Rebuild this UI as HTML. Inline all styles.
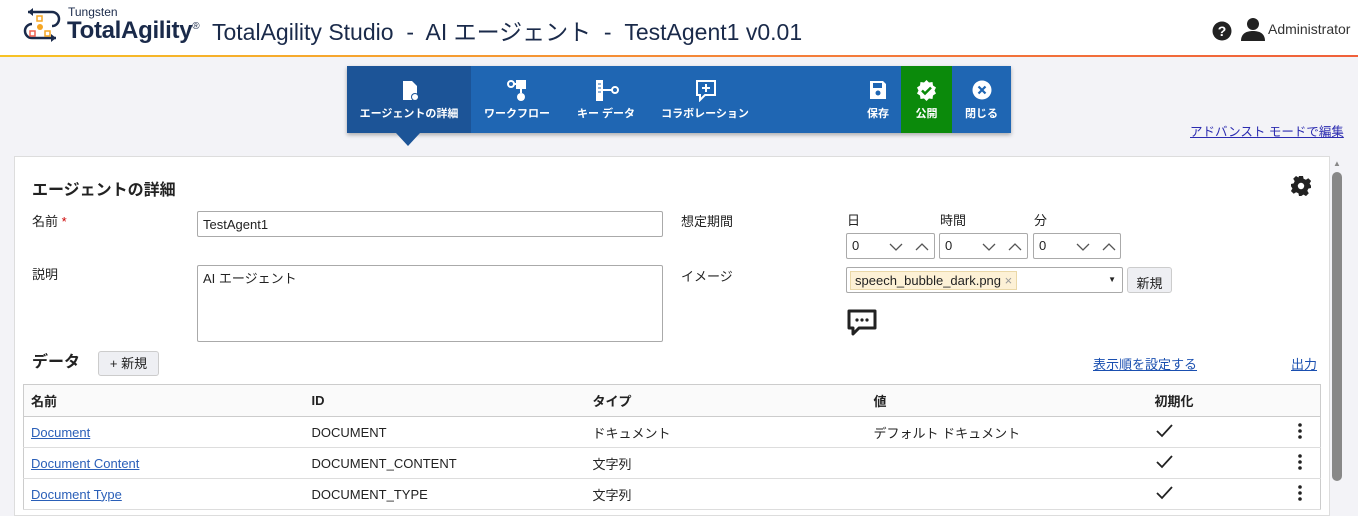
<!DOCTYPE html>
<html><head><meta charset="utf-8"><style>
*{box-sizing:border-box;margin:0;padding:0}
body{width:1358px;height:511px;overflow:hidden;background:#f3f3f7;font-family:"Liberation Sans","Noto Sans CJK JP",sans-serif;color:#222;position:relative}
.hdr{position:absolute;left:0;top:0;width:1358px;height:57px;background:#fff;border-bottom:2px solid;border-image:linear-gradient(90deg,#f7c325,#f47d3a 60%,#f0603a) 1}
.abs{position:absolute}
.nav{position:absolute;left:347px;top:66px;width:664px;height:67px;background:#1f66b3;box-shadow:0 2px 4px rgba(0,0,0,.3)}
.nav .it{position:absolute;top:0;height:67px;color:#fff;font-size:11px;font-weight:bold;text-align:center}
.nav .it span{position:absolute;left:0;right:0;top:39px}
.nav svg{position:absolute;top:14px}
.card{position:absolute;left:14px;top:156px;width:1316px;height:360px;background:#fff;border:1px solid #ddd}
.lbl{position:absolute;font-size:13px;color:#222;line-height:16px}
.inp{position:absolute;border:1px solid #aaa;background:#fff;font-size:13px;padding:6px 5px;border-radius:2px}
.btn{position:absolute;background:#eeeff3;border:1px solid #ccc;border-radius:3px;font-size:13px;text-align:center}
a{color:#1a4fb0;text-decoration:underline}
table{position:absolute;left:23px;top:384px;width:1298px;border-collapse:collapse;font-size:13px;border:1px solid #ccc}
th{text-align:left;font-weight:bold;height:32px;background:#fafafa;border-bottom:1px solid #ccc;padding-left:7px}
td{height:31px;border-bottom:1px solid #ddd;padding-left:7px}
td a{color:#2a5fb8}
.sp{position:absolute;top:9px}
</style></head><body>
<div class="hdr">
<svg class="abs" style="left:22px;top:7px" width="40" height="38" viewBox="0 0 40 38"><path d="M6 5H30a7 7 0 0 1 0 14" fill="none" stroke="#1a2a4a" stroke-width="2.5"/><path d="M6 5l5-4v8z" fill="#1a2a4a"/><path d="M10 17a7 7 0 0 0 0 14H34" fill="none" stroke="#1a2a4a" stroke-width="2.5"/><path d="M34 31l-5-4v8z" fill="#1a2a4a"/><rect x="15" y="9" width="5" height="5" fill="none" stroke="#f5a623" stroke-width="1.5"/><circle cx="18" cy="20" r="3" fill="#f5a623"/><rect x="8" y="24" width="5" height="5" fill="none" stroke="#f06050" stroke-width="1.5"/><rect x="23" y="24" width="5" height="5" fill="none" stroke="#f5a623" stroke-width="1.5"/></svg>
<div class="abs" style="left:68px;top:5px;font-size:12px;color:#1a2a4a">Tungsten</div>
<div class="abs" style="left:67px;top:17px;font-size:24px;font-weight:bold;color:#1a2a4a;letter-spacing:-0.3px">TotalAgility<sup style="font-size:10px;font-weight:normal">®</sup></div>
<div class="abs" style="left:212px;top:18px;font-size:23px;line-height:28px;color:#1a2a4a">TotalAgility Studio &nbsp;-&nbsp; AI エージェント &nbsp;-&nbsp; TestAgent1 v0.01</div>
<svg class="abs" style="left:1212px;top:21px" width="20" height="20"><circle cx="10" cy="10" r="9.5" fill="#222"/><text x="10" y="15" fill="#fff" font-size="14" font-weight="bold" text-anchor="middle" font-family="Liberation Sans">?</text></svg>
<svg class="abs" style="left:1240px;top:17px" width="26" height="24"><circle cx="13" cy="7" r="6" fill="#222"/><path d="M1 24c0-8 6-10 12-10s12 2 12 10z" fill="#222"/></svg>
<div class="abs" style="left:1268px;top:21px;font-size:14px;color:#333">Administrator</div>
</div>
<div class="nav">
<div class="it" style="left:0;width:124px;background:#1c5497"><svg style="left:54px" width="18" height="22"><path d="M2 1h9l5 5v14H2z" fill="#fff"/><circle cx="14" cy="17" r="4" fill="#1c5497"/><circle cx="14" cy="17" r="3" fill="#fff"/></svg><span>エージェントの詳細</span></div>
<div class="it" style="left:124px;width:92px"><svg style="left:36px" width="22" height="22"><circle cx="4" cy="4" r="3" fill="none" stroke="#fff" stroke-width="2"/><rect x="9" y="0" width="10" height="9" fill="#fff"/><path d="M7 4h3M14 9v4" stroke="#fff" stroke-width="2"/><circle cx="14" cy="17" r="4" fill="#fff"/></svg><span>ワークフロー</span></div>
<div class="it" style="left:216px;width:86px"><svg style="left:32px" width="24" height="22"><rect x="1" y="0" width="7" height="21" fill="#fff"/><path d="M3 4h3M3 8h3M3 12h3" stroke="#1f66b3"/><path d="M8 10h10" stroke="#fff" stroke-width="2"/><circle cx="20" cy="10" r="3" fill="none" stroke="#fff" stroke-width="2"/></svg><span>キー データ</span></div>
<div class="it" style="left:302px;width:112px"><svg style="left:47px" width="20" height="22"><path d="M1 1h18v14H9l-5 5v-5H1z" fill="none" stroke="#fff" stroke-width="2"/><path d="M10 4v8M6 8h8" stroke="#fff" stroke-width="2"/></svg><span>コラボレーション</span></div>
<div class="it" style="left:508px;width:46px"><svg style="left:14px" width="18" height="20"><path d="M1 1h13l3 3v15H1z" fill="#fff"/><rect x="4" y="3" width="9" height="5" fill="#1f66b3"/><circle cx="9" cy="13" r="2.5" fill="#1f66b3"/></svg><span>保存</span></div>
<div class="it" style="left:554px;width:51px;background:#0b8a0b"><svg style="left:15px" width="21" height="21"><path d="M10.5 0l2.5 2.5 3.5-.5.5 3.5 3 2-1.5 3 1.5 3-3 2-.5 3.5-3.5-.5-2.5 2.5-2.5-2.5-3.5.5-.5-3.5-3-2 1.5-3-1.5-3 3-2 .5-3.5 3.5.5z" fill="#fff"/><path d="M6 10.5l3 3 6-6" fill="none" stroke="#0b8a0b" stroke-width="2.5"/></svg><span>公開</span></div>
<div class="it" style="left:605px;width:59px"><svg style="left:20px" width="20" height="20"><circle cx="10" cy="10" r="9.5" fill="#fff"/><path d="M6.5 6.5l7 7M13.5 6.5l-7 7" stroke="#1f66b3" stroke-width="2.2"/></svg><span>閉じる</span></div>
</div>
<svg class="abs" style="left:396px;top:133px" width="24" height="13"><path d="M0 0h24L12 13z" fill="#1c5497"/></svg>
<a class="abs" style="left:1190px;top:121px;font-size:12.5px;color:#2b2bb0">アドバンスト モードで編集</a>
<div class="card"></div>
<div class="abs" style="left:1332px;top:172px;width:10px;height:309px;background:#888;border-radius:5px"></div>
<div class="abs" style="left:1333px;top:159px;font-size:8px;color:#888">▲</div>
<div class="abs" style="left:32px;top:181px;font-size:16px;font-weight:bold;line-height:20px">エージェントの詳細</div>
<svg class="abs" style="left:1291px;top:176px" width="20" height="20" viewBox="0 0 20 20"><path d="M8 0h4l.6 2.7 2.3 1 2.4-1.5 2.8 2.8-1.5 2.4 1 2.3L20 8v4l-2.7.6-1 2.3 1.5 2.4-2.8 2.8-2.4-1.5-2.3 1L12 20H8l-.6-2.7-2.3-1-2.4 1.5-2.8-2.8 1.5-2.4-1-2.3L0 12V8l2.7-.6 1-2.3L2.2 2.7 5 0l2.4 1.5z" fill="#222"/><circle cx="10" cy="10" r="3.2" fill="#fff"/></svg>
<div class="lbl" style="left:32px;top:214px">名前 <span style="color:#c00">*</span></div>
<div class="inp" style="left:197px;top:211px;width:466px;height:26px;padding-top:5px">TestAgent1</div>
<div class="lbl" style="left:32px;top:267px">説明</div>
<div class="inp" style="left:197px;top:265px;width:466px;height:77px;padding-top:2px">AI エージェント</div>
<div class="lbl" style="left:681px;top:214px">想定期間</div>
<div class="lbl" style="left:681px;top:269px">イメージ</div>
<div class="lbl" style="left:847px;top:213px">日</div><div class="lbl" style="left:940px;top:213px">時間</div><div class="lbl" style="left:1034px;top:213px">分</div>
<div class="inp" style="left:846px;top:233px;width:89px;height:26px;padding-top:4px">0<svg class="sp" style="left:42px" width="40" height="8"><path d="M1 1l6 6 6-6M27 7l6-6 6 6" fill="none" stroke="#555" stroke-width="1.3"/></svg></div>
<div class="inp" style="left:939px;top:233px;width:89px;height:26px;padding-top:4px">0<svg class="sp" style="left:42px" width="40" height="8"><path d="M1 1l6 6 6-6M27 7l6-6 6 6" fill="none" stroke="#555" stroke-width="1.3"/></svg></div>
<div class="inp" style="left:1033px;top:233px;width:88px;height:26px;padding-top:4px">0<svg class="sp" style="left:42px" width="40" height="8"><path d="M1 1l6 6 6-6M27 7l6-6 6 6" fill="none" stroke="#555" stroke-width="1.3"/></svg></div>
<div class="inp" style="left:846px;top:267px;width:277px;height:26px;padding:3px"><span style="display:inline-block;background:#fdf1d6;border:1px solid #ead8a8;padding:1px 4px;font-size:13px">speech_bubble_dark.png <span style="color:#999">×</span></span><span style="position:absolute;right:6px;top:7px;font-size:8px">▼</span></div>
<div class="btn" style="left:1127px;top:267px;width:45px;height:26px;padding-top:5px">新規</div>
<svg class="abs" style="left:847px;top:309px" width="31" height="28"><path d="M2 2h26v17H12l-6 6v-6H2z" fill="none" stroke="#222" stroke-width="3" stroke-linejoin="round"/><circle cx="10" cy="11" r="1.6" fill="#222"/><circle cx="15" cy="11" r="1.6" fill="#222"/><circle cx="20" cy="11" r="1.6" fill="#222"/></svg>
<div class="abs" style="left:32px;top:353px;font-size:16px;font-weight:bold;line-height:20px">データ</div>
<div class="btn" style="left:98px;top:351px;width:61px;height:25px;padding-top:4px;line-height:16px">+ 新規</div>
<a class="abs" style="left:1093px;top:354px;font-size:13px">表示順を設定する</a>
<a class="abs" style="left:1291px;top:354px;font-size:13px">出力</a>
<table>
<tr><th style="width:281px">名前</th><th style="width:281px">ID</th><th style="width:281px">タイプ</th><th style="width:281px">値</th><th style="width:130px">初期化</th><th></th></tr>
<tr><td><a>Document</a></td><td>DOCUMENT</td><td>ドキュメント</td><td>デフォルト ドキュメント</td><td><svg width="18" height="14"><path d="M2 7l5 5L17 1" fill="none" stroke="#222" stroke-width="1.8"/></svg></td><td style="padding-left:20px"><svg width="4" height="16"><circle cx="2" cy="2" r="1.8" fill="#222"/><circle cx="2" cy="8" r="1.8" fill="#222"/><circle cx="2" cy="14" r="1.8" fill="#222"/></svg></td></tr>
<tr><td><a>Document Content</a></td><td>DOCUMENT_CONTENT</td><td>文字列</td><td></td><td><svg width="18" height="14"><path d="M2 7l5 5L17 1" fill="none" stroke="#222" stroke-width="1.8"/></svg></td><td style="padding-left:20px"><svg width="4" height="16"><circle cx="2" cy="2" r="1.8" fill="#222"/><circle cx="2" cy="8" r="1.8" fill="#222"/><circle cx="2" cy="14" r="1.8" fill="#222"/></svg></td></tr>
<tr><td><a>Document Type</a></td><td>DOCUMENT_TYPE</td><td>文字列</td><td></td><td><svg width="18" height="14"><path d="M2 7l5 5L17 1" fill="none" stroke="#222" stroke-width="1.8"/></svg></td><td style="padding-left:20px"><svg width="4" height="16"><circle cx="2" cy="2" r="1.8" fill="#222"/><circle cx="2" cy="8" r="1.8" fill="#222"/><circle cx="2" cy="14" r="1.8" fill="#222"/></svg></td></tr>
</table>
</body></html>
